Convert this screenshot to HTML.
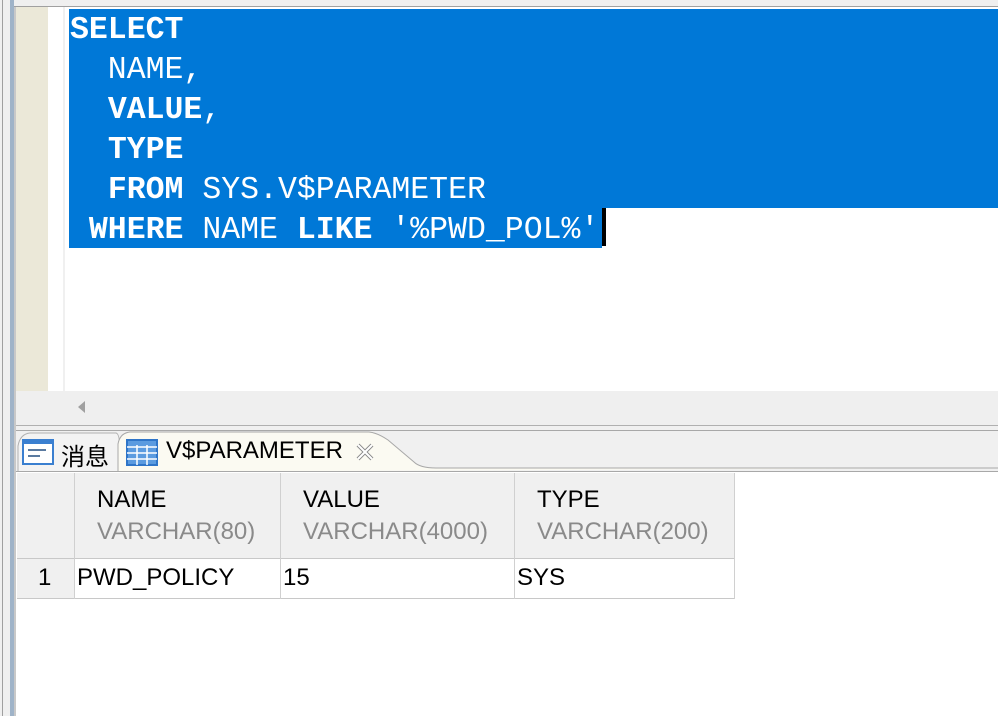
<!DOCTYPE html>
<html><head><meta charset="utf-8"><style>
html,body{margin:0;padding:0}
body{width:998px;height:716px;overflow:hidden;background:#fff;position:relative;font-family:"Liberation Sans","Noto Sans CJK SC",sans-serif}
.a{position:absolute}
.code{font-family:"Liberation Mono","Courier New",monospace;font-size:31.5px;line-height:40px;color:#fff;white-space:pre}
.code b{font-weight:bold}
.hd{font-size:24px;color:#000}
.ty{font-size:24px;color:#8a8a8a}
.cell{font-size:24px;color:#000}
</style></head><body>
<div class="a" style="left:0;top:0;width:10px;height:716px;background:#f0f0f0"></div>
<div class="a" style="left:2px;top:0;width:1px;height:716px;background:#a0a0a0"></div>
<div class="a" style="left:10px;top:0;width:4px;height:716px;background:#9fb3c8"></div>
<div class="a" style="left:14px;top:0;width:2px;height:716px;background:#c8c8c8"></div>
<div class="a" style="left:14px;top:0;width:984px;height:6px;background:#efefef"></div>
<div class="a" style="left:14px;top:6px;width:984px;height:1px;background:#a0a0a0"></div>
<div class="a" style="left:16px;top:7px;width:32px;height:384px;background:#ebe8d8"></div>
<div class="a" style="left:63px;top:7px;width:2px;height:384px;background:#f0f0f0"></div>
<div class="a" style="left:69px;top:9px;width:929px;height:199px;background:#0078d7"></div>
<div class="a" style="left:69px;top:208px;width:533px;height:40px;background:#0078d7"></div>
<div class="a" style="left:602px;top:208px;width:4px;height:38px;background:#000"></div>
<div class="a code" style="left:70px;top:11px"><b>SELECT</b>
  NAME,
  <b>VALUE</b>,
  <b>TYPE</b>
  <b>FROM</b> SYS.V$PARAMETER
 <b>WHERE</b> NAME <b>LIKE</b> '%PWD_POL%'</div>
<div class="a" style="left:16px;top:391px;width:982px;height:34px;background:#efefef"></div>
<div class="a" style="left:78px;top:401px;width:0;height:0;border-top:6px solid transparent;border-bottom:6px solid transparent;border-right:7px solid #a0a0a0"></div>
<div class="a" style="left:16px;top:425px;width:982px;height:1px;background:#b0b0b0"></div>
<div class="a" style="left:16px;top:426px;width:982px;height:45px;background:#f0f0f0"></div>
<div class="a" style="left:16px;top:430px;width:982px;height:1px;background:#a8a8a8"></div>
<svg class="a" style="left:16px;top:430px" width="982" height="42">
<path d="M2 42 V16 Q4 4 14 3 H100 Q106 4 102 42 Z" fill="#f3f3f3" stroke="#b0b0b0"/>
<path d="M102 42 V14 Q104 3 114 2 H353 Q362 3 372 10 L398 32 Q404 38 420 38 H982" fill="#fbfaf2" stroke="#a8a8a8"/>
<rect x="7" y="10" width="30" height="24" fill="#fff" stroke="#3a7fd0" stroke-width="2"/>
<rect x="7" y="10" width="30" height="4" fill="#3a7fd0"/>
<line x1="12" y1="20" x2="30" y2="20" stroke="#5a7aa0" stroke-width="2"/>
<line x1="12" y1="26" x2="24" y2="26" stroke="#5a7aa0" stroke-width="2"/>
<rect x="111" y="10" width="30" height="25" fill="#5b9be0" stroke="#2f75c8" stroke-width="2"/>
<g stroke="#fff" stroke-width="1.5"><line x1="111" y1="17" x2="141" y2="17"/><line x1="111" y1="23" x2="141" y2="23"/><line x1="111" y1="29" x2="141" y2="29"/><line x1="121" y1="15" x2="121" y2="35"/><line x1="131" y1="15" x2="131" y2="35"/></g>
<path d="M342 15 L356 29 M356 15 L342 29" stroke="#888" stroke-width="4"/>
<path d="M342 15 L356 29 M356 15 L342 29" stroke="#fff" stroke-width="2"/>
</svg>
<div class="a" style="left:61px;top:437px;font-size:24px;color:#000">消息</div>
<div class="a" style="left:166px;top:437px;font-size:24px;color:#000">V$PARAMETER</div>
<div class="a" style="left:16px;top:471px;width:982px;height:1px;background:#a8a8a8"></div>
<div class="a" style="left:17px;top:473px;width:718px;height:85px;background:#f0f0f0"></div>
<div class="a" style="left:17px;top:558px;width:57px;height:40px;background:#f0f0f0"></div>
<div class="a" style="left:17px;top:558px;width:718px;height:1px;background:#c8c8c8"></div>
<div class="a" style="left:17px;top:598px;width:718px;height:1px;background:#c8c8c8"></div>
<div class="a" style="left:74px;top:473px;width:1px;height:126px;background:#d0d0d0"></div>
<div class="a" style="left:280px;top:473px;width:1px;height:126px;background:#d0d0d0"></div>
<div class="a" style="left:514px;top:473px;width:1px;height:126px;background:#d0d0d0"></div>
<div class="a" style="left:734px;top:473px;width:1px;height:126px;background:#d0d0d0"></div>
<div class="a hd" style="left:97px;top:486px">NAME</div>
<div class="a ty" style="left:97px;top:518px">VARCHAR(80)</div>
<div class="a hd" style="left:303px;top:486px">VALUE</div>
<div class="a ty" style="left:303px;top:518px">VARCHAR(4000)</div>
<div class="a hd" style="left:537px;top:486px">TYPE</div>
<div class="a ty" style="left:537px;top:518px">VARCHAR(200)</div>
<div class="a cell" style="left:38px;top:564px">1</div>
<div class="a cell" style="left:77px;top:564px">PWD_POLICY</div>
<div class="a cell" style="left:283px;top:564px">15</div>
<div class="a cell" style="left:517px;top:564px">SYS</div>
</body></html>
